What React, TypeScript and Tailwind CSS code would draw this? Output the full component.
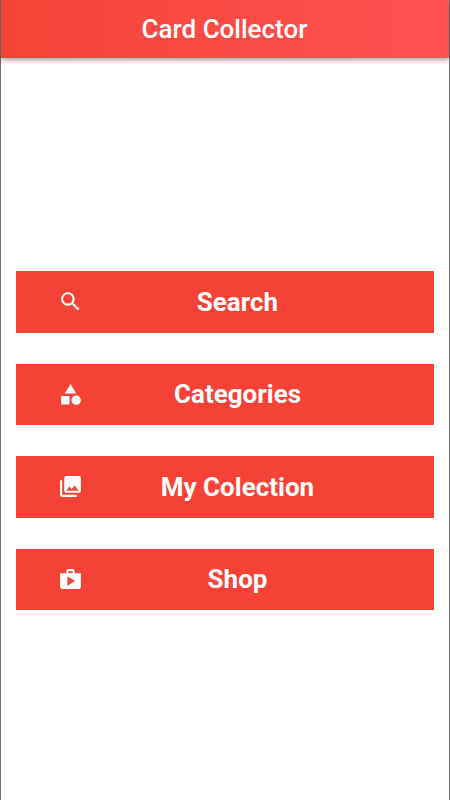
import React from "react";

const items = [
  { label: "Search", d: "M15.5 14h-.79l-.28-.27A6.471 6.471 0 0 0 16 9.5 6.5 6.5 0 1 0 9.5 16c1.61 0 3.09-.59 4.23-1.57l.27.28v.79l5 4.99L20.49 19l-4.99-5zm-6 0C7.01 14 5 11.99 5 9.5S7.01 5 9.5 5 14 7.01 14 9.5 11.99 14 9.5 14z" },
  { label: "Categories", d: "M12 2l-5.5 9h11L12 2zM17.5 13a4.5 4.5 0 1 0 0 9 4.5 4.5 0 0 0 0-9zM3 13.5h8v8H3z" },
  { label: "My Colection", d: "M22 16V4c0-1.1-.9-2-2-2H8c-1.1 0-2 .9-2 2v12c0 1.1.9 2 2 2h12c1.1 0 2-.9 2-2zm-11-4l2.03 2.71L16 11l4 5H8l3-4zM2 6v14c0 1.1.9 2 2 2h14v-2H4V6H2z" },
  { label: "Shop", d: "M16 6V4c0-1.11-.89-2-2-2h-4c-1.11 0-2 .89-2 2v2H2v13c0 1.11.89 2 2 2h16c1.11 0 2-.89 2-2V6h-6zm-6-2h4v2h-4V4zM9 18V9l7.5 4.5L9 18z" },
];

export default function App() {
  return (
    <div className="flex h-[800px] w-[450px] flex-col border-x border-[#707070] bg-white font-[Roboto,sans-serif]">
      <header className="flex h-[58px] shrink-0 items-center justify-center bg-linear-to-r from-[#f44336] to-[#ff5252] text-[26px] font-medium text-white shadow-[0_2px_5px_rgba(0,0,0,0.38)]">
        <h1 className="pr-px">Card Collector</h1>
      </header>
      <main className="flex flex-1 flex-col gap-[31.2px] px-[15px] pt-[213.3px]">
        {items.map((item) => (
          <button key={item.label} className="flex h-[61.3px] shrink-0 items-center bg-[#f44336] text-white">
            <svg className="ml-[42px] size-[25px] shrink-0" viewBox="0 0 24 24" fill="currentColor">
              <path d={item.d} />
            </svg>
            <span className="flex-1 pt-[1px] pr-[42px] text-center text-[26px] font-bold">{item.label}</span>
          </button>
        ))}
      </main>
    </div>
  );
}
